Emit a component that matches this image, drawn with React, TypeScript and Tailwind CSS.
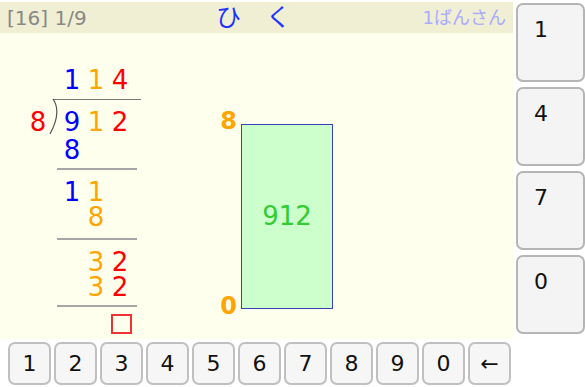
import { clsx } from 'clsx';

// long division drill: header, worked division, range bar, keypads
const BLUE = 'text-[#0000ff]';
const ORANGE = 'text-[#ffa500]';
const RED = 'text-[#ff0000]';

type Cell = { d: string; color: string } | null;

function DigitRow({ cells, className }: { cells: Cell[]; className?: string }) {
  return (
    <div className={clsx('flex ml-[60px] text-[26px]', className)}>
      {cells.map((c, i) => (
        <span key={i} className={clsx('w-[24px] text-center', c?.color)}>
          {c?.d}
        </span>
      ))}
    </div>
  );
}

function Rule() {
  return <div className="ml-[57px] w-[80px] h-[2px] bg-[#a6a6a6]" />;
}

function Division() {
  return (
    <div className="w-[200px] flex flex-col">
      {/* quotient */}
      <DigitRow
        className="mt-[34px] h-[26px] leading-[26px]"
        cells={[
          { d: '1', color: BLUE },
          { d: '1', color: ORANGE },
          { d: '4', color: RED },
        ]}
      />
      <div className="mt-[6px] ml-[53px] w-[88px] h-px bg-[#777]" />

      {/* divisor ) dividend */}
      <div className="mt-[9px] flex h-[26px] leading-[26px] text-[26px]">
        <span className="w-[28px]" />
        <span className={clsx('w-[20px] text-center', RED)}>8</span>
        <svg className="w-[12px] h-[38px] -mt-[11px] shrink-0" viewBox="0 0 12 38">
          <path d="M5 1 Q14 14 2 36" fill="none" stroke="#555" strokeWidth="1.2" />
        </svg>
        <span className={clsx('w-[24px] text-center', BLUE)}>9</span>
        <span className={clsx('w-[24px] text-center', ORANGE)}>1</span>
        <span className={clsx('w-[24px] text-center', RED)}>2</span>
      </div>
      <DigitRow className="mt-[2px] h-[26px] leading-[26px]" cells={[{ d: '8', color: BLUE }, null, null]} />
      <div className="mt-[5px]">
        <Rule />
      </div>

      <DigitRow
        className="mt-[10px] h-[25px] leading-[25px]"
        cells={[{ d: '1', color: BLUE }, { d: '1', color: ORANGE }, null]}
      />
      <DigitRow className="h-[25px] leading-[25px]" cells={[null, { d: '8', color: ORANGE }, null]} />
      <div className="mt-[8px]">
        <Rule />
      </div>

      <DigitRow
        className="mt-[10px] h-[25px] leading-[25px]"
        cells={[null, { d: '3', color: ORANGE }, { d: '2', color: RED }]}
      />
      <DigitRow
        className="h-[25px] leading-[25px]"
        cells={[null, { d: '3', color: ORANGE }, { d: '2', color: RED }]}
      />
      <div className="mt-[5px]">
        <Rule />
      </div>

      {/* answer cursor */}
      <div className="mt-[7px] ml-[111px] w-[21px] h-[20px] border-2 border-[#ee3333]" />
    </div>
  );
}

function RangeBar() {
  return (
    <div className="mt-[76px] flex items-start">
      <div className="w-[37px] h-[209px] flex flex-col justify-between items-end text-[24px] leading-[24px] font-bold text-[#ffa500]">
        <span>8</span>
        <span>0</span>
      </div>
      <div className="mt-[15px] ml-[4px] w-[92px] h-[185px] border border-[#3344bb] bg-[#ccffcc] flex items-center justify-center text-[26px] text-[#33cc33]">
        912
      </div>
    </div>
  );
}

const sideKeys = ['1', '4', '7', '0'];
const bottomKeys = ['1', '2', '3', '4', '5', '6', '7', '8', '9', '0', '←'];

export default function App() {
  return (
    <div className="w-[585px] h-[387px] bg-white font-['DejaVu_Sans','Noto_Sans_CJK_JP',sans-serif] overflow-hidden">
      <div className="flex">
        <div className="mt-[2px] w-[513px] h-[337px] bg-[#ffffee] flex flex-col">
          <div className="h-[31px] bg-[#f0efd3] flex items-center">
            <span className="ml-[7px] w-[202px] text-[20px] text-[#888]">[16] 1/9</span>
            <span className="ml-[7px] text-[25px] text-[#2233ff]">ひ　く</span>
            <span className="ml-auto mr-[7px] text-[18px] text-[#aaaaff]">1ばんさん</span>
          </div>
          <div className="flex">
            <Division />
            <RangeBar />
          </div>
        </div>

        <div className="ml-[3px] pt-[3px] flex flex-col gap-[5px]">
          {sideKeys.map((k) => (
            <button
              key={k}
              className="w-[69px] h-[79px] border-2 border-[#b5b5b5] rounded-[7px] bg-[#f4f4f4] text-left pl-[16px] pt-[8px] flex items-start text-[22px] text-[#111]"
            >
              {k}
            </button>
          ))}
        </div>
      </div>

      <div className="flex gap-[3px] pl-[8px] pt-[3px]">
        {bottomKeys.map((k) => (
          <button
            key={k}
            className="w-[43px] h-[43px] border-2 border-[#c0c0c0] rounded-[7px] bg-[#f6f6f6] flex items-center justify-center text-[22px] text-[#111]"
          >
            {k}
          </button>
        ))}
      </div>
    </div>
  );
}
